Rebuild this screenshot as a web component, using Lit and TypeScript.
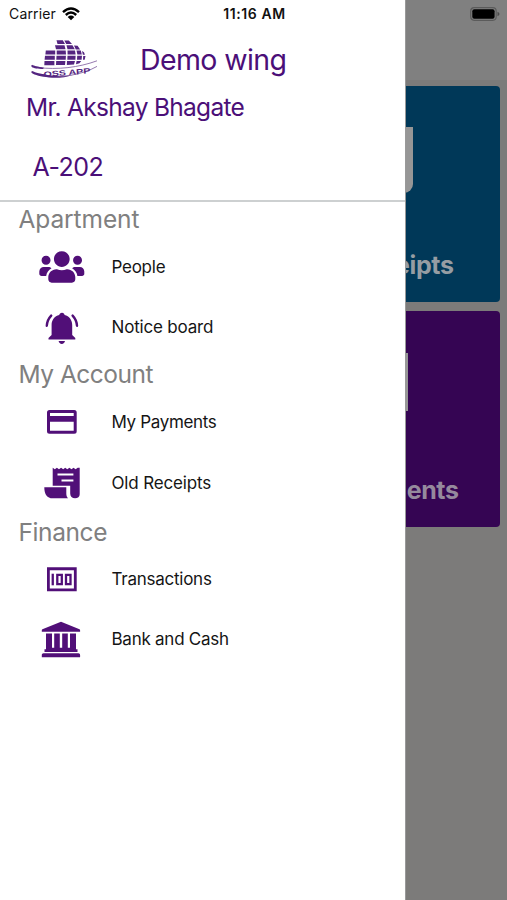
import { LitElement, html, svg, css } from "lit";
import { customElement } from "lit/decorators.js";

const art: Record<string, unknown> = {
  people: svg`<g transform="translate(1.3 2) scale(.0703)"><path d="M96 224c35.3 0 64-28.7 64-64s-28.7-64-64-64-64 28.7-64 64 28.7 64 64 64zm448 0c35.3 0 64-28.7 64-64s-28.7-64-64-64-64 28.7-64 64 28.7 64 64 64zm32 32h-64c-17.6 0-33.5 7.1-45.1 18.6 40.3 22.1 68.9 62 75.1 109.4h66c17.7 0 32-14.3 32-32v-32c0-35.3-28.7-64-64-64zm-256 0c61.9 0 112-50.1 112-112S381.9 32 320 32 208 82.1 208 144s50.1 112 112 112zm76.8 32h-8.3c-20.8 10-43.9 16-68.5 16s-47.6-6-68.5-16h-8.3C179.6 288 128 339.6 128 403.2V432c0 26.5 21.5 48 48 48h288c26.5 0 48-21.5 48-48v-28.8c0-63.6-51.6-115.2-115.2-115.2zm-223.7-13.4C161.5 263.1 145.6 256 128 256H64c-35.3 0-64 28.7-64 64v32c0 17.7 14.3 32 32 32h65.9c6.3-47.4 34.9-87.3 75.2-109.4z"/></g>`,
  bell: svg`<path d="M24 5.8c1.5 0 2.5 1 2.6 2.3 4.6 1.200 7.600 4.900 7.600 9.900v10l3.100 3v1.500H10.500V31l3.100-3V18c0-5 3-8.700 7.600-9.900.2-1.300 1.300-2.300 2.800-2.300zM20.600 34h6.400c-.4 1.800-1.500 2.900-3.200 2.900s-2.800-1.100-3.200-2.900z"/><path class="line" d="M13.200 8.600C10.500 11.500 9 14.800 8.800 18.800M34.600 8.600c2.700 2.900 4.200 6.200 4.400 10.200"/>`,
  card: svg`<path fill-rule="evenodd" d="M11.500 8h24.700a2.500 2.500 0 0 1 2.500 2.500v18.700a2.500 2.500 0 0 1-2.500 2.500H11.500A2.500 2.500 0 0 1 9 29.200V10.500A2.500 2.500 0 0 1 11.500 8zM12 10.900v3h23.700v-3zm0 8.900v9h23.700v-9z"/>`,
  receipt: svg`<path fill-rule="evenodd" d="M14.700 4.700l2.100 1.600 2.100-1.600L21 6.300l2.100-1.600 2.100 1.600 2-1.600 2.100 1.600 2.100-1.600 2.100 1.600 2-1.600 2.100 1.600 2.100-1.600h2v26.500c0 2.500-1.900 4.100-4.600 4.100-3 0-4.900-1.800-4.900-4.800v-7.700H14.700zM19.500 10.400v2h15.900v-2zM23.500 16.400v2h11.900v-2z"/><path d="M6.300 24.200h22v6.300c0 2 .6 3.600 1.700 4.800H14.500c-5.200 0-8.200-4-8.200-11.100z"/>`,
  note: svg`<path fill-rule="evenodd" d="M9 8.300h29.700v24H9zM11.800 11.200v18.200h24.100V11.200z"/><path d="M13.600 14.700h2.300v11.600h-2.300z"/><path class="thin" d="M19.300 15.900h4.500v9.200h-4.500zM28 15.900h4.500v9.200H28z"/>`,
  bank: svg`<path d="M23 2.700l18.500 7.600c.5.2.6.600.6 1.200v1.300H3.800v-1.300c0-.6.1-1 .6-1.200zM8 14.500h6v15H8zM16.200 14.500h5.600v15h-5.600zM24.200 14.500h5.600v15h-5.600zM32 14.500h6v15h-6zM6.500 30.300h33v2.600h-33zM3.800 38.300v-2.200c0-1.200.7-1.900 1.800-1.900h34.700c1.100 0 1.800.7 1.800 1.900v2.200zM8 28.700h30v2H8z"/>`,
};

const groups = [
  { title: "Apartment", key: "g1", items: [["people", "People", "i1"], ["bell", "Notice board", "i2"]] },
  { title: "My Account", key: "g2", items: [["card", "My Payments", "i3"], ["receipt", "Old Receipts", "i4"]] },
  { title: "Finance", key: "g3", items: [["note", "Transactions", "i5"], ["bank", "Bank and Cash", "i6"]] },
];

@customElement("side-drawer")
class SideDrawer extends LitElement {
  static styles = css`
    :host { display: block; background: #fff; color: #4b0f78; border-right: 1px solid #999; box-sizing: border-box; }
    header { height: 202px; box-sizing: border-box; padding-top: 36px; border-bottom: 2px solid #cdd0d1; }
    .brand { display: flex; align-items: center; height: 46px; padding-left: 28px; }
    .logo { display: block; width: 74px; height: 46px; fill: #542580; }
    .logo text { font: 700 7.500px "Liberation Sans", sans-serif; }
    .logo .trail { stroke: #8a6ba6; stroke-width: .9; fill: none; }
    .wing { margin-left: 38px; font-size: 28.500px; letter-spacing: -.6px; }
    .name { padding-left: 26px; line-height: 50px; font-size: 24.500px; letter-spacing: -.7px; }
    .flat { padding-left: 32.500px; line-height: 70px; font-size: 25px; letter-spacing: -.5px; }
    h2 { margin: 0; padding-left: 18.500px; height: 35px; line-height: 35px; font-size: 24.500px; font-weight: 400; color: #808080; letter-spacing: -.1px; }
    .g1 { height: 155px; }
    .g2 { height: 158px; }
    .g2 h2 { letter-spacing: -.5px; }
    .g3 h2 { height: 34px; letter-spacing: -.4px; }
    .item { display: flex; align-items: center; height: 60px; }
    .i4 { height: 62px; }
    .icon { width: 48px; height: 40px; margin: 0 25.500px 0 38px; fill: #510f78; }
    .icon .line { fill: none; stroke: #510f78; stroke-width: 2.400; stroke-linecap: round; }
    .icon .thin { fill: none; stroke: #510f78; stroke-width: 2.300; }
    .label { color: #151515; font-size: 17px; letter-spacing: -.25px; }
    .i2 .label { letter-spacing: -.18px; }
    .i3 .label { letter-spacing: -.35px; }
    .i4 .label { letter-spacing: -.15px; }
  `;
  render() {
    return html`
      <header>
        <div class="brand">
          <svg class="logo" viewBox="0 0 74 46">
            <path d="M28.500 4.300h6.300l2.200 3.600h-7.500zM36.300 4.500h4.500l3.200 3.600h-5.800zM27 9.200h9.500l1 4H28zM38.500 9.200h6l2.300 4h-7.300zM46 9.400l3.600.4 2.500 3.600h-4.300zM17.800 14.400h9.400v4.200h-9.800zM28.700 14.400h9l.3 4.200h-9.300zM39.500 14.400h7.500l.6 4.200h-8zM48.500 14.600h4.300l1 4h-4.400zM54 15l2 1.200.9 2.600h-2zM17 19.700h9.800v4H16.600zM28.500 19.700h9.400l-.2 4h-9.400zM39.500 19.700h8.100l-.2 4h-8.100zM49.200 19.700H54l-.4 4h-4.600zM55.200 19.900h2.300l-.8 3.800H55zM16.500 24.900h9.900v4.300H16.300zM28.200 24.900h9.200l-.4 4.200h-9zM39 24.900h8l-1 3.500-7.200.6zM48.600 24.900h4.600l-1.700 2.400-3.500 1z"/>
            <path class="trail" d="M10 31.500C29 34 51 31.500 69 24.800M12 38.400c21 4.400 42 .5 57-8"/>
            <path d="M4 28.800c2.500 1.200 5.500 1.800 12 2.900l-1 1.200c-5-.1-9.500-.8-11.200-2-.8-.6-.5-1.700.2-2.100zM4 35c4 1.700 7.500 2.600 20 4.800 8 .7 15 .3 21-.9-8 2.700-16 3.400-24 2.600-8-.8-14.500-2.300-17.200-4.400-.7-.5-.5-1.700.2-2.100z"/>
            <text x="15.500" y="39.200" textLength="47" lengthAdjust="spacingAndGlyphs" transform="rotate(-4.500 38 38)">OSS APP</text>
          </svg>
          <span class="wing">Demo wing</span>
        </div>
        <div class="name">Mr. Akshay Bhagate</div>
        <div class="flat">A-202</div>
      </header>
      ${groups.map((g) => html`
        <section class=${g.key}>
          <h2><span class="title">${g.title}</span></h2>
          ${g.items.map(([icon, label, id]) => html`
            <div class="item ${id}">
              <svg class="icon" viewBox="0 0 48 40">${art[icon]}</svg>
              <span class="label">${label}</span>
            </div>`)}
        </section>`)}
    `;
  }
}

@customElement("app-root")
class AppRoot extends LitElement {
  static styles = css`
    :host { display: block; position: relative; height: 900px; overflow: hidden; background: #7c7b7a; font-family: Inter, "Liberation Sans", sans-serif; }
    .bar { height: 80px; background: #808080; }
    .tiles { display: flex; flex-direction: column; align-items: flex-end; gap: 9px; padding: 6px 7.500px 0 0; }
    .tile { display: flex; flex-direction: column; justify-content: space-between; align-items: flex-end; width: 241px; height: 216px; box-sizing: border-box; border-radius: 4px; background: #003858; color: #969da3; }
    .tile.violet { background: #350553; color: #958a9d; }
    .sheet { width: 80px; height: 66px; margin: 41px 87px 0 0; background: #969696; border-radius: 0 0 9px 0; }
    .violet .sheet { height: 58px; margin: 42px 92px 0 0; border-radius: 0; }
    .caption { font-size: 25px; font-weight: 700; line-height: 30px; margin: 0 46px 22px 0; letter-spacing: -.4px; white-space: nowrap; }
    .violet .caption { margin-right: 41px; }
    side-drawer { position: absolute; left: 0; top: 0; width: 406px; height: 900px; }
    .status { position: absolute; left: 0; top: 0; width: 507px; height: 27px; display: grid; grid-template-columns: 1fr auto 1fr; align-items: center; box-sizing: border-box; padding: 0 7px 0 9px; font-size: 14px; color: #111; }
    .left { display: flex; align-items: center; gap: 6px; }
    .carrier { letter-spacing: .15px; }
    .time { font-weight: 600; font-size: 14px; letter-spacing: .6px; }
    .battery { justify-self: end; width: 30px; height: 14px; }
    .wifi { width: 18px; height: 14px; }
  `;
  render() {
    return html`
      <div class="bar"></div>
      <div class="tiles">
        <div class="tile"><div class="sheet"></div><div class="caption">My Receipts</div></div>
        <div class="tile violet"><div class="sheet"></div><div class="caption">My Payments</div></div>
      </div>
      <side-drawer></side-drawer>
      <div class="status">
        <div class="left"><span class="carrier">Carrier</span>
          <svg class="wifi" viewBox="0 0 18 14"><path d="M1 5.200Q9-2.200 17 5.200M3.800 8Q9 3.200 14.200 8" fill="none" stroke="#000" stroke-width="2.400"/><path d="M5.700 9.900Q9 7.200 12.300 9.900L9 13.300z"/></svg>
        </div>
        <span class="time">11:16 AM</span>
        <svg class="battery" viewBox="0 0 30 14"><rect x=".7" y=".7" width="25.500" height="12.600" rx="3.500" fill="none" stroke="#5b5b5b" stroke-width="1.200"/><rect x="2.300" y="2.300" width="22.300" height="9.400" rx="2"/><path d="M27.500 4.700q2 .7 2 2.300t-2 2.300z" fill="#4b4b4b"/></svg>
      </div>
    `;
  }
}
